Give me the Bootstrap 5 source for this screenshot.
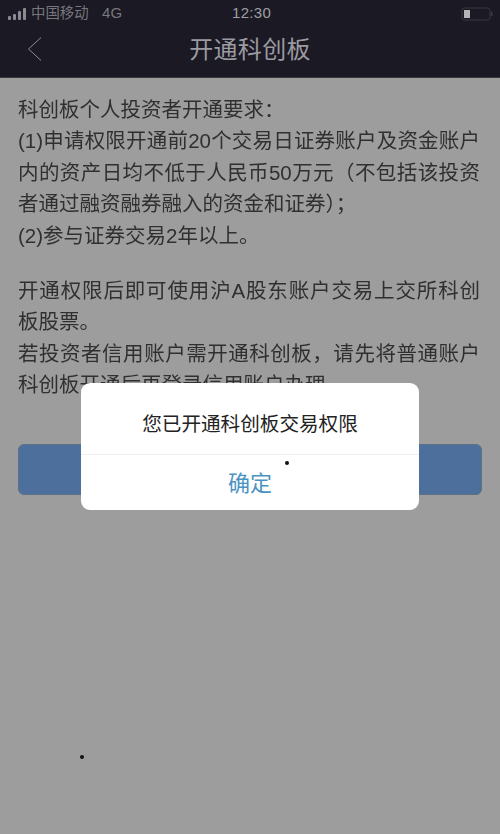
<!DOCTYPE html>
<html lang="zh">
<head>
<meta charset="utf-8">
<title>开通科创板</title>
<link href="https://cdn.jsdelivr.net/npm/bootstrap@5.3.0/dist/css/bootstrap.min.css" rel="stylesheet">
<style>
html,body{width:500px;height:834px;overflow:hidden;margin:0}
body{background:#9d9d9d;font-family:"Liberation Sans","Noto Sans CJK SC",sans-serif;position:relative}
.top-area{background:#1a1924;height:78px;border-bottom:1px solid #3a3a3a}
.status-row{height:27px;padding:0 6px 0 8px;color:#77767c;font-size:14.4px}
.sig{display:flex;align-items:flex-end;gap:1.5px;height:12px;margin-right:5px}
.sig i{display:block;width:3.4px;background:#8b8a90;border-radius:1px}
.carrier{width:57px;white-space:nowrap}
.net{margin-left:14px;font-size:15px}
.clock{left:232px;top:2px;position:absolute;font-size:15px;color:#a0a0a4;letter-spacing:.3px}
.title-row{height:50px;position:relative}
.back{left:27px;top:9px;position:absolute}
.page-title{font-size:24px;color:#9b9aa0;line-height:1;padding-top:11px;text-align:center;letter-spacing:.3px}
.copy{padding:16px 20px 0 18px;font-size:20.5px;line-height:31.4px;color:#303030;white-space:nowrap;filter:blur(.3px)}
.fill-line{text-align:justify;text-align-last:justify;white-space:normal}
.gap-line{height:24px}
.blue-bar{margin:43px 18px 0;height:51px;background:#4c6f9b;border-radius:6px;border:1px solid #5c7186}
.dialog{position:absolute;left:81px;top:383px;width:338px;height:127px;background:#fff;border-radius:9px;border:0;overflow:hidden}
.dialog-msg{height:72px;font-size:19.6px;color:#222;display:flex;align-items:center;justify-content:center;padding-top:12px;border-bottom:1px solid #f0f0f0}
.dialog-ok{font-size:22px;color:#4a93c4;background:none;border:0;height:55px;width:100%;padding:1px 0 0}
.dot{position:absolute;width:4px;height:4px;border-radius:50%;background:#111}
.d1{left:285px;top:461px}
.d2{left:80px;top:755px}
</style>
</head>
<body>
<div class="top-area">
  <div class="status-row d-flex align-items-center">
    <span class="sig"><i style="height:4px"></i><i style="height:6px"></i><i style="height:9px"></i><i style="height:12px"></i></span>
    <span class="carrier">中国移动</span><span class="net">4G</span>
    <span class="ms-auto d-flex align-items-center">
      <svg width="33" height="16" viewBox="0 0 33 16"><rect x="1" y="2" width="28" height="12" rx="2.5" fill="none" stroke="#3a3940"/><rect x="3" y="4" width="6" height="8" fill="#b5b5b9"/><rect x="30" y="6" width="1.6" height="4" fill="#3a3940"/></svg>
    </span>
  </div>
  <span class="clock">12:30</span>
  <div class="title-row">
    <svg class="back" width="16" height="26" viewBox="0 0 16 26"><path d="M14 1.5 1.5 13 14 24.5" fill="none" stroke="#8e8d93" stroke-width="1"/></svg>
    <div class="page-title">开通科创板</div>
  </div>
</div>
<div class="copy">
  <div>科创板个人投资者开通要求：</div>
  <div class="fill-line">(1)申请权限开通前20个交易日证券账户及资金账户</div>
  <div class="fill-line">内的资产日均不低于人民币50万元（不包括该投资</div>
  <div>者通过融资融券融入的资金和证券）；</div>
  <div>(2)参与证券交易2年以上。</div>
  <div class="gap-line"></div>
  <div class="fill-line">开通权限后即可使用沪A股东账户交易上交所科创</div>
  <div>板股票。</div>
  <div class="fill-line">若投资者信用账户需开通科创板，请先将普通账户</div>
  <div>科创板开通后再登录信用账户办理。</div>
</div>
<div class="blue-bar"></div>
<div class="card dialog">
  <div class="dialog-msg">您已开通科创板交易权限</div>
  <button type="button" class="btn dialog-ok">确定</button>
</div>
<span class="dot d1"></span>
<span class="dot d2"></span>
<script src="https://cdn.jsdelivr.net/npm/bootstrap@5.3.0/dist/js/bootstrap.bundle.min.js"></script>
</body>
</html>
